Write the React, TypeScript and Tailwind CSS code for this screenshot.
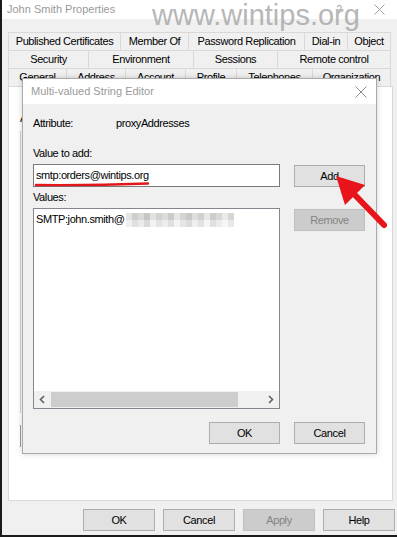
import React from "react"

const row1 = [
  { label: "Published Certificates", w: "w-[112px]" },
  { label: "Member Of", w: "w-[68px]" },
  { label: "Password Replication", w: "w-[116px]" },
  { label: "Dial-in", w: "w-[43px]" },
  { label: "Object", w: "w-[44px]" },
]
const row2 = [
  { label: "Security", w: "w-[80px]" },
  { label: "Environment", w: "w-[105px]" },
  { label: "Sessions", w: "w-[84px]" },
  { label: "Remote control", w: "w-[114px]" },
]
const row3 = [
  { label: "General", w: "w-[58px]" },
  { label: "Address", w: "w-[59px]" },
  { label: "Account", w: "w-[60px]" },
  { label: "Profile", w: "w-[51px]" },
  { label: "Telephones", w: "w-[76px]" },
  { label: "Organization", w: "w-[79px]" },
]

const mosaic = [
  ["#e4e4e4", "#cfcfcf", "#d9d9d9", "#c6c6c6", "#e2e2e2", "#d2d2d2", "#dcdcdc", "#cbcbcb", "#e6e6e6", "#d4d4d4", "#c8c8c8", "#dedede", "#d0d0d0", "#e8e8e8", "#cdcdcd", "#d8d8d8", "#eaeaea", "#d6d6d6"],
  ["#f0f0f0", "#e0e0e0", "#ebebeb", "#dadada", "#f2f2f2", "#e3e3e3", "#ededed", "#dfdfdf", "#f4f4f4", "#e6e6e6", "#dcdcdc", "#efefef", "#e2e2e2", "#f5f5f5", "#e1e1e1", "#ececec", "#f6f6f6", "#e9e9e9"],
]

function TabRow({ tabs }: { tabs: { label: string; w: string }[] }) {
  return (
    <div className="flex">
      {tabs.map((t, i) => (
        <div
          key={t.label}
          className={`${t.w} h-[18px] flex items-center justify-center border-l border-t border-[#d9d9d9] ${
            i === tabs.length - 1 ? "border-r" : ""
          }`}
        >
          {t.label}
        </div>
      ))}
    </div>
  )
}

function Btn({ label, disabled, className = "" }: { label: string; disabled?: boolean; className?: string }) {
  return (
    <div
      className={`w-[71px] h-[22px] flex items-center justify-center border ${
        disabled ? "bg-[#cccccc] border-[#bfbfbf] text-[#838383]" : "bg-[#e1e1e1] border-[#adadad] text-black"
      } ${className}`}
    >
      {label}
    </div>
  )
}

function Chevron({ dir }: { dir: "left" | "right" }) {
  return (
    <svg width="17" height="15" viewBox="0 0 17 15">
      <path
        d={dir === "left" ? "M10 4 L6.5 7.5 L10 11" : "M7 4 L10.5 7.5 L7 11"}
        fill="none"
        stroke="#606060"
        strokeWidth="1.6"
      />
    </svg>
  )
}

export default function App() {
  return (
    <div className="relative w-[397px] h-[537px] overflow-hidden bg-[#f0f0f0] border-l-2 border-b-2 border-[#1b1b1b] font-['Liberation_Sans',Arial,sans-serif] text-[11px] tracking-[-0.4px] text-black">
      {/* title bar */}
      <div className="h-[19px] bg-white flex items-center pl-[5px] pr-[12px] text-[#999999] tracking-normal">
        <span>John Smith Properties</span>
        <span className="ml-auto text-[10px] text-[#a8a8a8] mr-[32px]">?</span>
        <svg width="11" height="11" viewBox="0 0 11 11">
          <path d="M0.5 0.5 L10.5 10.5 M10.5 0.5 L0.5 10.5" stroke="#a0a0a0" strokeWidth="1" />
        </svg>
      </div>

      {/* tabs */}
      <div className="pl-[6px] mt-[13px]">
        <TabRow tabs={row1} />
        <TabRow tabs={row2} />
        <TabRow tabs={row3} />
        <div className="w-[385px] h-[415px] bg-white border border-[#d9d9d9] flex flex-col">
          <div className="pl-[11px] pt-[25px] leading-[12px]">A</div>
          <div className="ml-[11px] mt-[7px] w-px h-[282px] bg-[#cfcfcf]" />
          <div className="ml-[11px] mt-[12px] w-px h-[22px] bg-[#9a9a9a]" />
        </div>
      </div>

      {/* outer buttons */}
      <div className="flex justify-end gap-[8px] pr-[2px] mt-[8px]">
        <Btn label="OK" className="w-[72px]" />
        <Btn label="Cancel" className="w-[72px]" />
        <Btn label="Apply" disabled className="w-[72px]" />
        <Btn label="Help" className="w-[72px]" />
      </div>

      {/* watermark */}
      <div className="absolute left-[150px] top-0 text-[29px] tracking-normal leading-[30px] text-[#a6a6a6] opacity-80">
        www.wintips.org
      </div>

      {/* Multi-valued String Editor dialog */}
      <div className="absolute left-[20px] top-[78px] w-[355px] h-[376px] border border-[#aaaaaa] bg-[#f0f0f0] shadow-[0_0_6px_rgba(0,0,0,0.18)] flex flex-col">
        <div className="h-[25px] bg-white flex items-center pl-[8px] pr-[9px] text-[#9a9a9a] tracking-normal">
          <span>Multi-valued String Editor</span>
          <svg className="ml-auto" width="12" height="12" viewBox="0 0 12 12">
            <path d="M0.5 0.5 L11.5 11.5 M11.5 0.5 L0.5 11.5" stroke="#8a8a8a" strokeWidth="1" />
          </svg>
        </div>
        <div className="pl-[10px] pr-[11px] pt-[12px] flex flex-col">
          <div className="flex h-[14px] items-center">
            <span className="w-[83px]">Attribute:</span>
            <span>proxyAddresses</span>
          </div>
          <div className="mt-[16px] h-[14px] flex items-center">Value to add:</div>
          <div className="mt-[4px] flex gap-[14px] items-start">
            <div className="relative w-[247px] h-[23px] bg-white border border-[#7a7a7a] flex items-center pl-[2px]">
              smtp:orders@wintips.org
            </div>
            <Btn label="Add" className="mt-[1px]" />
          </div>
          <div className="mt-[3px] h-[14px] flex items-center">Values:</div>
          <div className="mt-[4px] flex gap-[14px] items-start">
            <div className="w-[247px] h-[201px] bg-white border border-[#828790] flex flex-col">
              <div className="flex items-center pl-[2px] pt-[3px] h-[18px]">
                <span>SMTP:john.smith@</span>
                <svg width="108" height="14" viewBox="0 0 108 14" className="ml-[1px]">
                  {mosaic.map((r, y) =>
                    r.map((c, x) => <rect key={`${y}-${x}`} x={x * 6} y={y * 7} width="6" height="7" fill={c} />)
                  )}
                </svg>
              </div>
              <div className="mt-auto h-[17px] bg-[#f0f0f0] flex items-center">
                <Chevron dir="left" />
                <div className="w-[187px] h-[15px] bg-[#cdcdcd]" />
                <div className="ml-auto">
                  <Chevron dir="right" />
                </div>
              </div>
            </div>
            <Btn label="Remove" disabled className="mt-[1px]" />
          </div>
          <div className="mt-[13px] flex justify-end gap-[14px]">
            <Btn label="OK" />
            <Btn label="Cancel" />
          </div>
        </div>
      </div>

      {/* red underline */}
      <svg className="absolute left-[32px] top-[180px]" width="118" height="8" viewBox="0 0 118 8">
        <path d="M2 5 Q 60 5.5 114 3.5" fill="none" stroke="#e3161b" strokeWidth="2.4" strokeLinecap="round" />
      </svg>

      {/* red arrow */}
      <svg className="absolute left-[328px] top-[170px]" width="62" height="62" viewBox="0 0 62 62">
        <path d="M24 24 L54 55" stroke="#e8141c" strokeWidth="6" strokeLinecap="round" />
        <polygon points="6,6 35,15 15,35" fill="#e8141c" />
      </svg>
    </div>
  )
}
